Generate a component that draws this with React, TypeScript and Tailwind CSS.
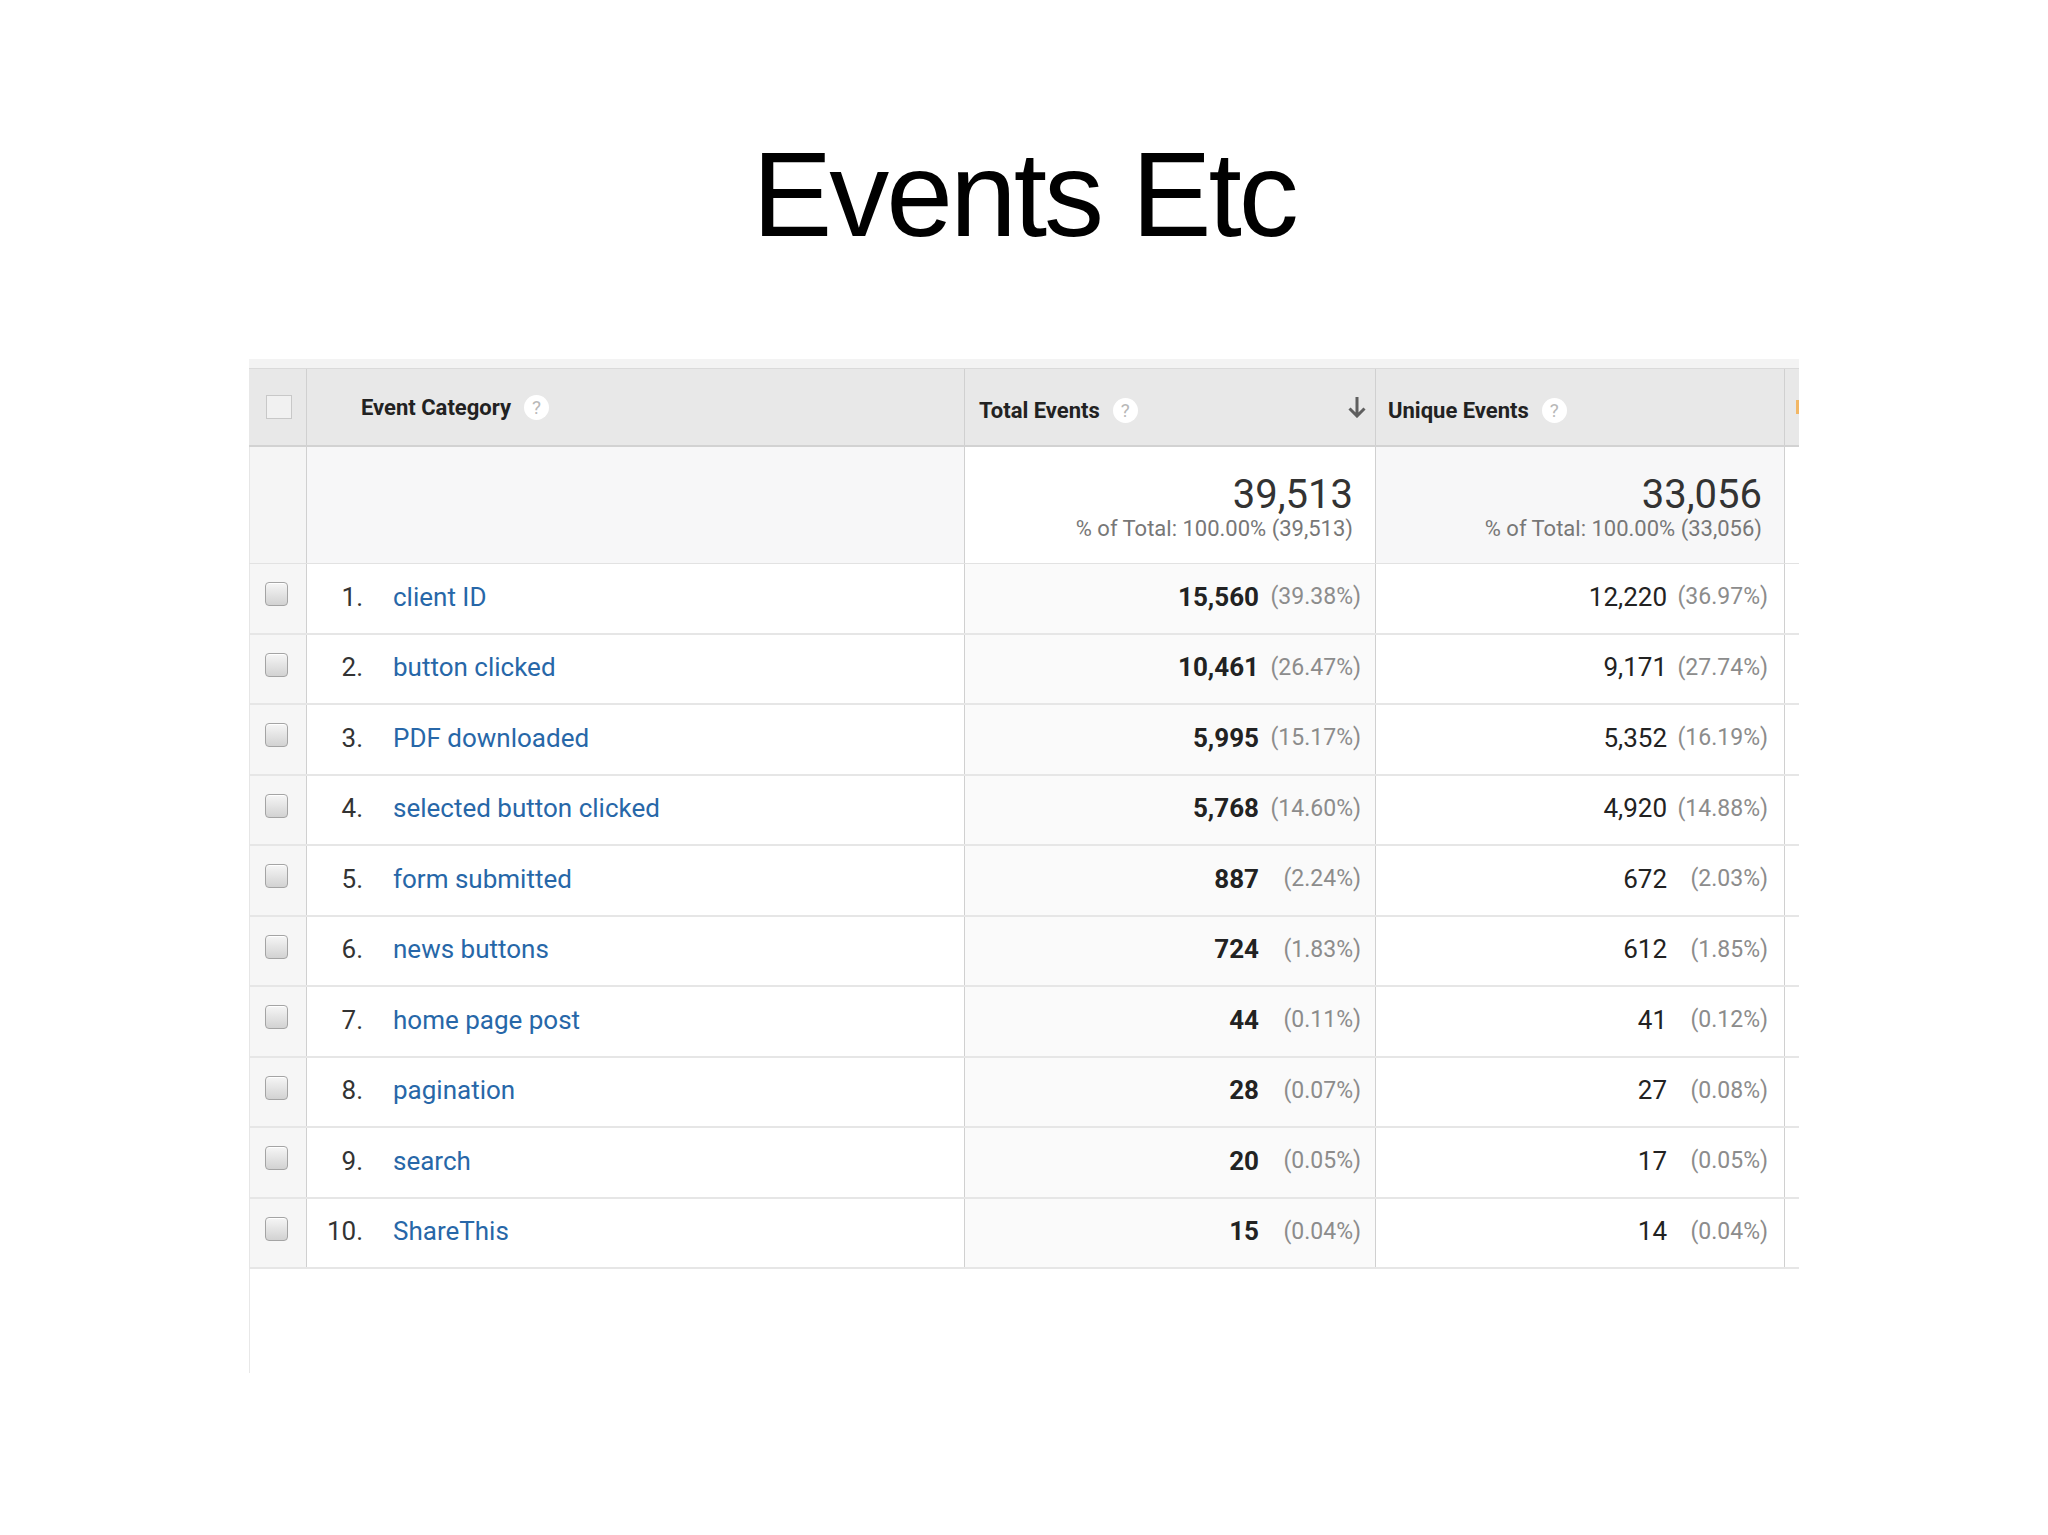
const rows = [
  { n: "1.", name: "client ID", total: "15,560", tp: "(39.38%)", uniq: "12,220", up: "(36.97%)" },
  { n: "2.", name: "button clicked", total: "10,461", tp: "(26.47%)", uniq: "9,171", up: "(27.74%)" },
  { n: "3.", name: "PDF downloaded", total: "5,995", tp: "(15.17%)", uniq: "5,352", up: "(16.19%)" },
  { n: "4.", name: "selected button clicked", total: "5,768", tp: "(14.60%)", uniq: "4,920", up: "(14.88%)" },
  { n: "5.", name: "form submitted", total: "887", tp: "(2.24%)", uniq: "672", up: "(2.03%)" },
  { n: "6.", name: "news buttons", total: "724", tp: "(1.83%)", uniq: "612", up: "(1.85%)" },
  { n: "7.", name: "home page post", total: "44", tp: "(0.11%)", uniq: "41", up: "(0.12%)" },
  { n: "8.", name: "pagination", total: "28", tp: "(0.07%)", uniq: "27", up: "(0.08%)" },
  { n: "9.", name: "search", total: "20", tp: "(0.05%)", uniq: "17", up: "(0.05%)" },
  { n: "10.", name: "ShareThis", total: "15", tp: "(0.04%)", uniq: "14", up: "(0.04%)" },
]

function Help() {
  return (
    <span className="ml-[13px] inline-flex h-[25px] w-[25px] items-center justify-center rounded-full bg-white text-[19px] font-normal leading-none text-[#b8b8b8]">
      ?
    </span>
  )
}

function RowCheckbox() {
  return (
    <div className="h-[24px] w-[23px] rounded-[4px] border border-[#a4a4a4] bg-gradient-to-b from-[#f6f6f6] to-[#d2d2d2] shadow-[inset_0_1px_0_#fff]" />
  )
}

export default function App() {
  return (
    <div className="min-h-[1535px] bg-white pt-[134px] font-['Roboto',sans-serif]">

      <h1 className="text-center font-['Liberation_Sans',Arial,sans-serif] text-[120px] leading-none tracking-[-3px] text-black">
        Events Etc
      </h1>

      <div className="mx-auto mt-[105px] w-[1550px]">

        <div className="h-[9px] bg-[#f3f3f3]" />

        {/* header */}
        <div className="grid h-[79px] grid-cols-[58px_658px_411px_409px_14px] border-t border-b-2 border-t-[#dadada] border-b-[#d2d2d2] bg-[#e8e8e8] text-[22px] font-bold text-[#222]">
          <div className="flex items-center border-r border-[#d0d0d0] pl-[17px]">
            <div className="h-[24px] w-[26px] border border-[#c8c8c8] bg-[#f1f1f1]" />
          </div>
          <div className="flex items-center border-r border-[#d0d0d0] pl-[54px]">
            Event Category <Help />
          </div>
          <div className="flex items-center border-r border-[#d0d0d0] pl-[14px] pr-[8px] pt-[6px]">
            Total Events <Help />
            <svg className="mb-[6px] ml-auto" width="20" height="22" viewBox="0 0 20 22" fill="none" stroke="#5f5f5f" strokeWidth="3">
              <path d="M10 1v19M2.5 12.5L10 20l7.5-7.5" />
            </svg>
          </div>
          <div className="flex items-center border-r border-[#d0d0d0] pl-[12px] pt-[6px]">
            Unique Events <Help />
          </div>
          <div className="flex items-center justify-end">
            <div className="h-[14px] w-[3px] bg-[#f2b766]" />
          </div>
        </div>

        {/* summary */}
        <div className="grid h-[117px] grid-cols-[58px_658px_411px_409px_14px] border-b border-[#e2e2e2] bg-[#f7f7f8]">
          <div className="border-l border-r border-l-[#e6e6e6] border-r-[#d0d0d0] bg-[#f5f5f5]" />
          <div className="border-r border-[#d0d0d0]" />
          <div className="flex flex-col items-end justify-center border-r border-[#d0d0d0] bg-white pr-[22px] pt-[4px] text-[#777]">
            <div className="text-[40px] leading-[44px] text-[#333]">39,513</div>
            <div className="text-[22px] leading-[24px]">% of Total: 100.00% (39,513)</div>
          </div>
          <div className="flex flex-col items-end justify-center border-r border-[#d0d0d0] pr-[22px] pt-[4px] text-[#777]">
            <div className="text-[40px] leading-[44px] text-[#333]">33,056</div>
            <div className="text-[22px] leading-[24px]">% of Total: 100.00% (33,056)</div>
          </div>
          <div className="bg-white" />
        </div>

        {/* rows */}
        {rows.map((r) => (
          <div
            key={r.n}
            className="grid h-[70.5px] grid-cols-[58px_658px_411px_409px_14px] border-b-2 border-[#e6e6e6] bg-white"
          >
            <div className="flex items-center border-l border-r border-l-[#e6e6e6] border-r-[#d0d0d0] bg-[#f6f6f6] pb-[8px] pl-[15px]">
              <RowCheckbox />
            </div>
            <div className="flex items-center border-r border-[#d0d0d0] pb-[2px] text-[26px]">
              <span className="w-[56px] text-right text-[#333]">{r.n}</span>
              <span className="ml-[30px] text-[#2767a8]">{r.name}</span>
            </div>
            <div className="flex items-center justify-end border-r border-[#d0d0d0] bg-[#fafafa] pb-[2px] pr-[14px]">
              <span className="text-[26px] font-bold text-[#222]">{r.total}</span>
              <span className="w-[102px] text-right text-[23px] text-[#8c8c8c]">{r.tp}</span>
            </div>
            <div className="flex items-center justify-end border-r border-[#d0d0d0] pb-[2px] pr-[16px]">
              <span className="text-[26px] text-[#222]">{r.uniq}</span>
              <span className="w-[101px] text-right text-[23px] text-[#8c8c8c]">{r.up}</span>
            </div>
            <div className="bg-white" />
          </div>
        ))}

        <div className="h-[104px] w-[58px] border-l border-[#e8e8e8]" />
      </div>
    </div>
  )
}
